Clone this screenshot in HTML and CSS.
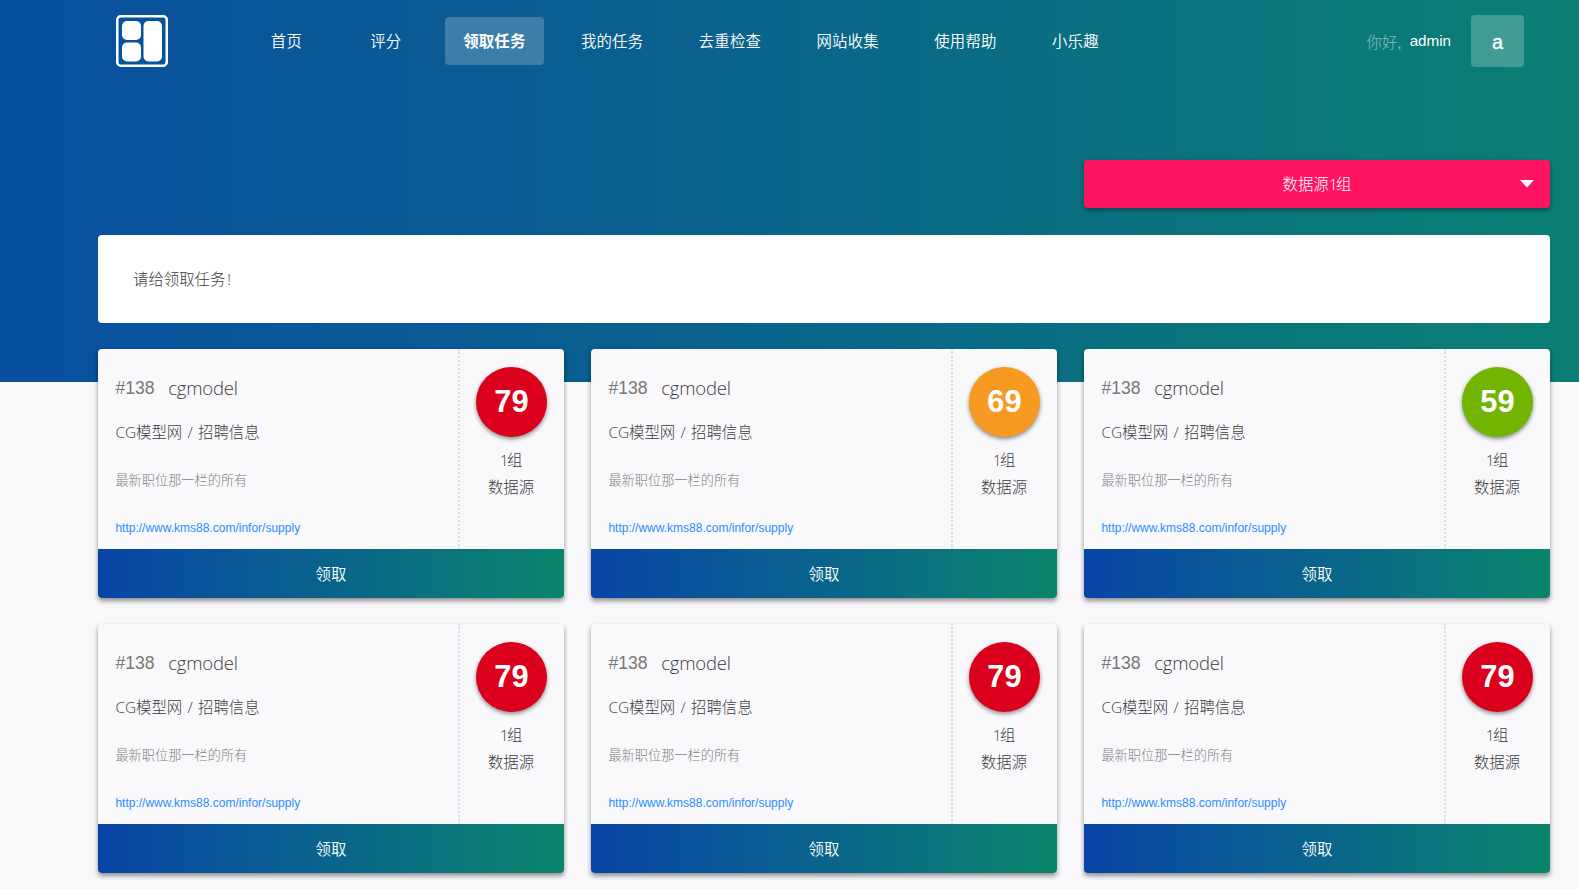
FILE: index.html
```
<!DOCTYPE html>
<html lang="zh-CN">
<head>
<meta charset="utf-8">
<title>领取任务</title>
<link rel="stylesheet" href="styles.css">
</head>
<body>
<div class="hero">
  <header class="topbar">
    <svg class="logo" viewBox="0 0 52 52"><rect x="1.25" y="1.25" width="49.5" height="49.5" rx="3.5" fill="none" stroke="#fff" stroke-width="2.5"/><rect x="6" y="6" width="19" height="19" rx="5" fill="#fff"/><rect x="6" y="27.500" width="19" height="19" rx="5" fill="#fff"/><rect x="27.500" y="6" width="18.500" height="40.500" rx="5" fill="#fff"/></svg>
    <nav class="nav">
      <a>首页</a><a>评分</a><a class="active">领取任务</a><a>我的任务</a><a>去重检查</a><a>网站收集</a><a>使用帮助</a><a>小乐趣</a>
    </nav>
    <div class="user"><span class="hello">你好,</span><span class="name">admin</span><span class="avatar">a</span></div>
  </header>
</div>
<main class="page">
  <div class="filter"><span>数据源<i class="one">1</i>组</span><svg class="caret" viewBox="0 0 14 8"><path d="M0 0H14L7 7.500Z" fill="#fff"/></svg></div>
  <div class="notice">请给领取任务<i class="mark">!</i></div>
  <div class="cards" id="cards"></div>
</main>
<template id="card">
  <article class="card">
    <div class="body">
      <div class="info">
        <h2><span class="num">#138</span><span class="title">cgmodel</span></h2>
        <p class="site">CG模型网 / 招聘信息</p>
        <p class="desc">最新职位那一栏的所有</p>
        <a class="url">http://www.kms88.com/infor/supply</a>
      </div>
      <div class="side"><div class="score"></div><p><i class="one">1</i>组</p><p>数据源</p></div>
    </div>
    <button class="take">领取</button>
  </article>
</template>
<script src="cards.js"></script>
</body>
</html>
```
FILE: cards.js
```
const levels = { 79: "high", 69: "mid", 59: "low" };
const template = document.getElementById("card");
for (const score of [79, 69, 59, 79, 79, 79]) {
  const card = template.content.cloneNode(true);
  const badge = card.querySelector(".score");
  badge.textContent = score;
  badge.classList.add(levels[score]);
  document.getElementById("cards").append(card);
}
```
FILE: styles.css
```
* { box-sizing: border-box; }
body {
  margin: 0;
  height: 889px;
  overflow: hidden;
  background: #f9f9fc;
  color: #3c3c3c;
  font: 300 15.4px/26px "Liberation Sans", "Noto Sans CJK SC", sans-serif;
}
p, h2 { margin: 0; font-weight: 300; }
.hero {
  height: 382px;
  margin-bottom: -382px;
  background: linear-gradient(90deg, #084f9f 0%, #095a94 29%, #096a87 58%, #0a7080 70%, #0a7a78 88%, #0a7e73 100%);
}
.topbar { display: flex; height: 82px; padding: 0 55px 0 116px; align-items: center; }
.logo { width: 52px; height: 52px; }
.nav { display: flex; gap: 19.4px; margin-left: 78.4px; color: #fff; letter-spacing: .2px; }
.nav a { min-width: 80px; height: 48px; padding: 0 18px; line-height: 49px; text-align: center; white-space: nowrap; font-weight: 350; }
.nav .active { background: rgba(255,255,255,.21); border-radius: 4px; font-weight: 700; line-height: 50px; }
.user { display: flex; align-items: center; margin-left: auto; color: #fff; }
.hello { opacity: .5; padding-top: 3px; }
.name { margin: 0 20px 0 8px; font-weight: 400; font-size: 15.2px; }
.avatar { width: 53px; height: 52px; border-radius: 4px; background: rgba(255,255,255,.23); text-align: center; font: 400 20px/54px "Liberation Sans", sans-serif; -webkit-text-stroke: .3px #fff; }
.page { position: relative; display: grid; grid-template-columns: repeat(3, 466px); column-gap: 27px; padding: 160px 29px 0 98px; }
.filter {
  grid-column: 3;
  display: grid;
  grid-template-columns: 1fr auto 1fr;
  align-items: center;
  height: 48px;
  border-radius: 4px;
  background: #ff1461;
  color: #fff;
  box-shadow: 0 2px 4px rgba(0,0,0,.4);
}
.filter span { grid-column: 2; line-height: 46px; padding-top: 2px; }
.one, .mark { font-family: "Open Sans", sans-serif; font-style: normal; font-weight: 300; letter-spacing: -1.5px; line-height: 1; }
.mark { margin-left: 2px; }
.caret { width: 14px; height: 8px; justify-self: end; margin-right: 16px; }
.notice { grid-column: 1 / 4; height: 88px; margin-top: 27px; padding-left: 35px; border-radius: 4px; background: #fff; line-height: 90px; }
.cards { grid-column: 1 / 4; display: grid; grid-template-columns: subgrid; row-gap: 26px; margin-top: 26px; }
.card { height: 249px; border-radius: 4px; overflow: hidden; background: #f9f9fc; box-shadow: 0 3px 5px rgba(0,0,0,.43); }
.body { display: flex; height: 200px; }
.info { width: 360px; padding: 26px 0 0 17.4px; }
.info h2 { display: flex; height: 26px; }
.num { font-size: 17.6px; font-weight: 400; color: #777; line-height: 27px; }
.title { margin-left: 13.6px; font: 300 18.5px/25px "Open Sans", sans-serif; letter-spacing: -.2px; }
.site { margin-top: 19px; font-family: "Open Sans", "Noto Sans CJK SC", sans-serif; word-spacing: 1.3px; }
.desc { margin-top: 22px; font-size: 13.2px; color: #808080; }
.url { display: block; margin-top: 21px; font-size: 12px; font-weight: 400; color: #2b8cff; }
.side { width: 106px; padding: 18px 0 0 16px; border-left: 2px dotted #dedee3; }
.side p { width: 70px; text-align: center; line-height: 26.500px; }
.score { width: 71px; height: 70px; margin-bottom: 11px; border-radius: 50%; color: #fff; text-align: center; font: 700 30.800px/69px "Liberation Sans", sans-serif; box-shadow: 0 2px 4px rgba(0,0,0,.45); }
.high { background: #db001b; }
.mid { background: #f69a22; }
.low { background: #71b500; }
.take { display: block; width: 100%; height: 49px; padding: 2px 0 0; border: 0; background: linear-gradient(90deg, #0844a5, #095698 28%, #096888 56%, #0a7878 80%, #0a846b); color: #fff; font: inherit; font-weight: 350; }
```
